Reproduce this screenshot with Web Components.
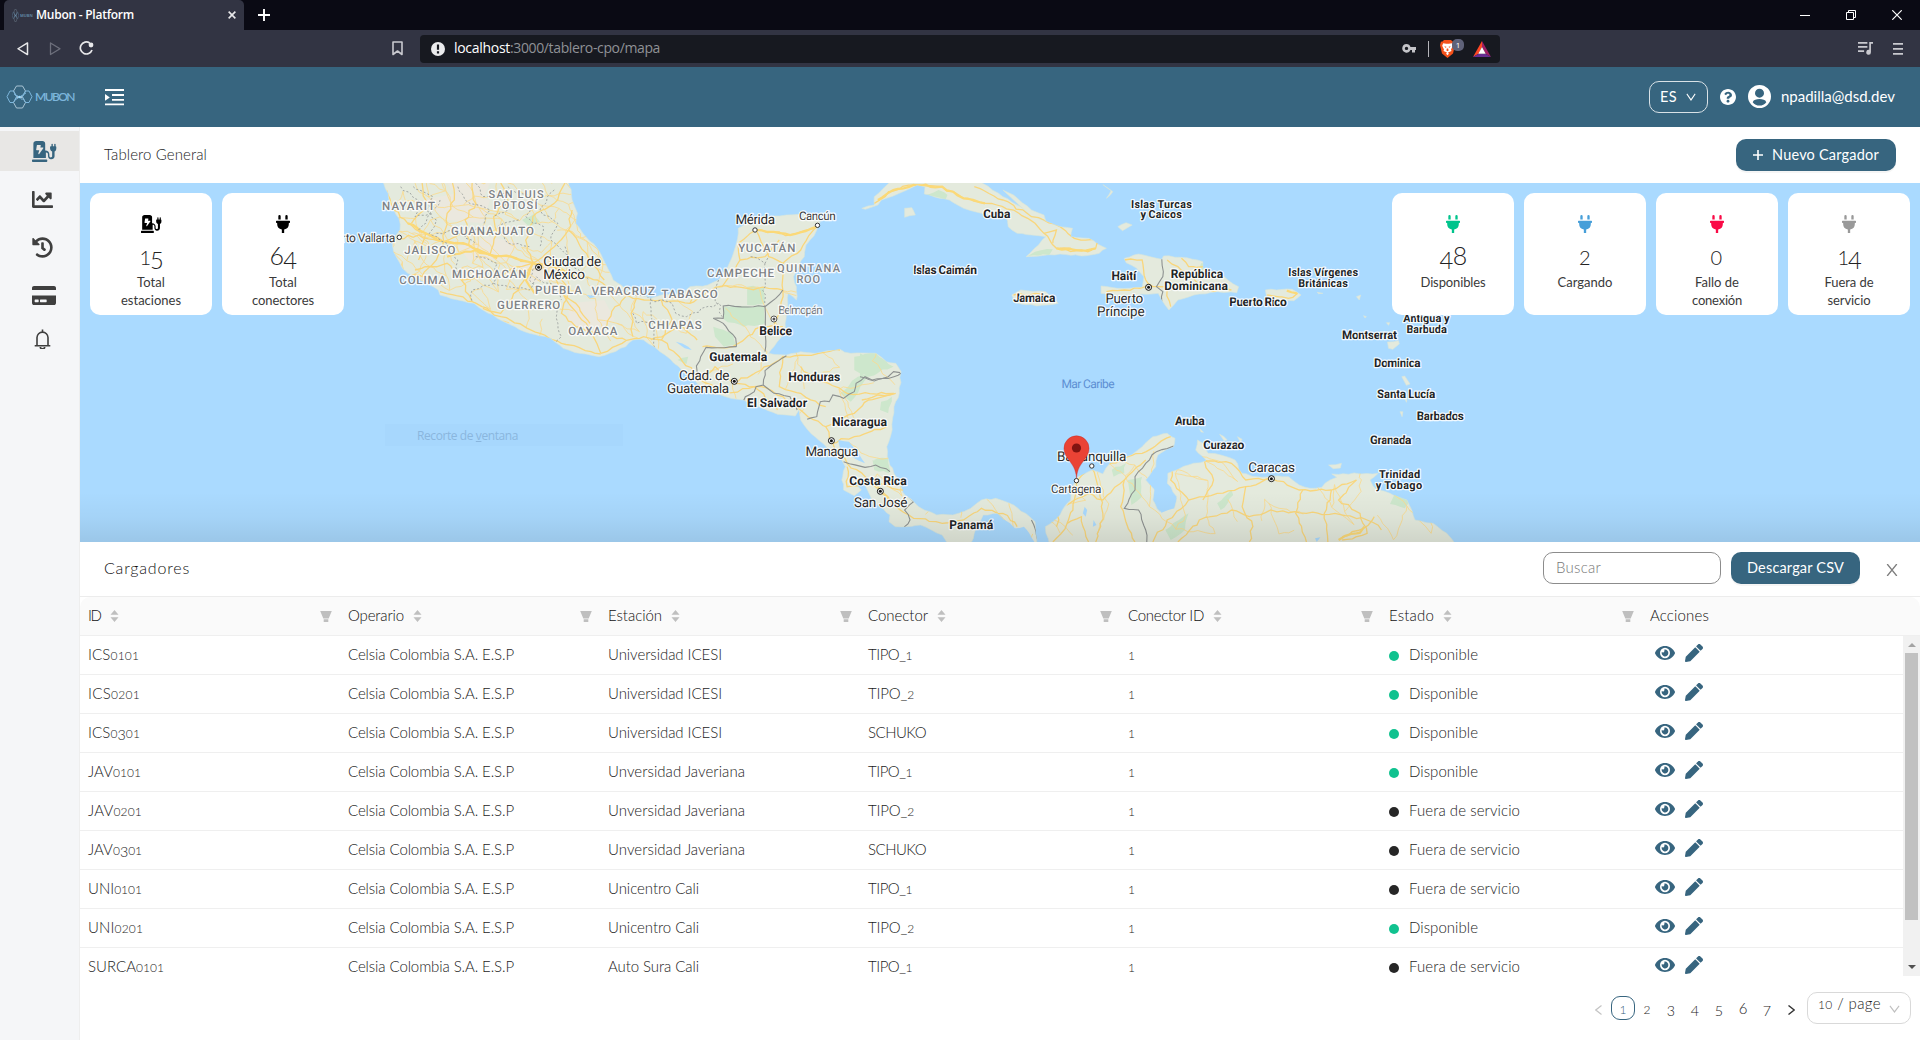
<!DOCTYPE html>
<html lang="es">
<head>
<meta charset="utf-8">
<title>Mubon - Platform</title>
<style>
html,body{margin:0;height:100%;overflow:hidden;background:#fff}
body{font-family:Lato,"Open Sans",sans-serif}
</style>
</head>
<body>
<mubon-app></mubon-app>
<script>
const define = (name, cls) => customElements.define(name, cls);
class Base extends HTMLElement {
  constructor() { super(); this.attachShadow({ mode: 'open' }); }
  connectedCallback() { this.shadowRoot.innerHTML = this.view(); this.ready && this.ready(); }
}

/* ---------- icons ---------- */
const fa = (w, d) => ({ box: `0 0 ${w} 512`, body: `<path fill="currentColor" d="${d}"/>` });
const line = (box, body, sw = 1.2) => ({ box, body: `<g fill="none" stroke="currentColor" stroke-width="${sw}">${body}</g>` });
const ICONS = {
  station: fa(576, 'M336 448H16c-8.84 0-16 7.16-16 16v32c0 8.84 7.16 16 16 16h320c8.84 0 16-7.16 16-16v-32c0-8.84-7.16-16-16-16zm208-320V80c0-8.84-7.16-16-16-16s-16 7.16-16 16v48h-32V80c0-8.84-7.16-16-16-16s-16 7.16-16 16v48h-16c-8.84 0-16 7.16-16 16v35.76c0 36.94 17.05 68.22 48 77.66V372c0 15.64-14.36 28-32 28s-32-14.36-32-32v-48c0-48.6-39.4-88-88-88h-8V64c0-35.35-28.65-64-64-64H96C60.65 0 32 28.65 32 64v352h288V280h8c22.09 0 40 17.91 40 40v48.61c0 39.67 28.92 75.16 68.41 79.01C481.71 452.05 520 416.41 520 372V257.4c31-9.4 40-40.7 40-77.6V144c0-8.84-7.16-16-16-16zm-283.91 47.76l-93.7 139c-2.2 3.33-6.21 5.24-10.39 5.24-7.67 0-13.47-6.28-11.67-12.92L167.35 224H108c-7.25 0-12.85-5.59-11.89-11.89l16-107C112.9 99.9 117.98 96 124 96h68c7.88 0 13.62 6.54 11.6 13.21L192 160h57.7c9.24 0 15.01 8.78 10.39 15.76z'),
  plug: fa(384, 'M320 32a32 32 0 0 0-64 0v96h64zm48 128H16A16 16 0 0 0 0 176v32a16 16 0 0 0 16 16h16v32a160.07 160.07 0 0 0 128 156.8V512h64v-99.2A160.07 160.07 0 0 0 352 256v-32h16a16 16 0 0 0 16-16v-32a16 16 0 0 0-16-16zM128 32a32 32 0 0 0-64 0v96h64z'),
  chart: { box: '0 64 512 384', body: '<path fill="currentColor" d="M496 384H64V80c0-8.84-7.16-16-16-16H16C7.16 64 0 71.16 0 80v336c0 17.67 14.33 32 32 32h464c8.84 0 16-7.16 16-16v-32c0-8.84-7.16-16-16-16zM464 96H345.94c-21.38 0-32.09 25.85-16.97 40.97l32.4 32.4L288 242.75l-73.37-73.37c-12.5-12.5-32.76-12.5-45.25 0l-68.69 68.69c-6.25 6.25-6.25 16.38 0 22.63l22.62 22.62c6.25 6.25 16.38 6.25 22.63 0L192 237.25l73.37 73.37c12.5 12.5 32.76 12.5 45.25 0l96-96 32.4 32.4c15.12 15.12 40.97 4.41 40.97-16.97V112c.01-8.84-7.15-16-15.99-16z"/>' },
  history: fa(512, 'M504 255.531c.253 136.64-111.18 248.372-247.82 248.468-59.015.042-113.223-20.53-155.822-54.911-11.077-8.94-11.905-25.541-1.839-35.607l11.267-11.267c8.609-8.609 22.353-9.551 31.891-1.984C173.062 425.135 212.781 440 256 440c101.705 0 184-82.311 184-184 0-101.705-82.311-184-184-184-48.814 0-93.149 18.969-126.068 49.932l50.754 50.754c10.08 10.08 2.941 27.314-11.313 27.314H24c-8.837 0-16-7.163-16-16V38.627c0-14.254 17.234-21.393 27.314-11.314l49.372 49.372C129.209 34.136 189.552 8 256 8c136.81 0 247.747 110.78 248 247.531zm-180.912 78.784l9.823-12.63c8.138-10.463 6.253-25.542-4.21-33.679L288 256.349V152c0-13.255-10.745-24-24-24h-16c-13.255 0-24 10.745-24 24v135.651l65.409 50.874c10.463 8.137 25.541 6.253 33.679-4.21z'),
  card: { box: '0 32 576 448', body: '<path fill="currentColor" d="M0 432c0 26.5 21.5 48 48 48h480c26.5 0 48-21.5 48-48V256H0v176zm192-68c0-6.6 5.4-12 12-12h136c6.6 0 12 5.4 12 12v40c0 6.600-5.400 12-12 12H204c-6.600 0-12-5.400-12-12v-40zm-128 0c0-6.600 5.400-12 12-12h72c6.600 0 12 5.400 12 12v40c0 6.600-5.400 12-12 12H76c-6.600 0-12-5.400-12-12v-40zM576 80v48H0V80c0-26.500 21.500-48 48-48h480c26.500 0 48 21.500 48 48z"/>' },
  eye: { box: '0 64 576 384', body: '<path fill="currentColor" d="M572.52 241.4C518.29 135.59 410.93 64 288 64S57.68 135.64 3.480 241.410a32.350 32.350 0 0 0 0 29.190C57.710 376.410 165.070 448 288 448s230.320-71.640 284.520-177.410a32.350 32.350 0 0 0 0-29.190zM288 400a144 144 0 1 1 144-144 143.930 143.930 0 0 1-144 144zm0-240a95.310 95.310 0 0 0-25.310 3.790 47.850 47.850 0 0 1-66.900 66.900A95.780 95.780 0 1 0 288 160z"/>' },
  pencil: fa(512, 'M497.9 142.1l-46.1 46.1c-4.7 4.7-12.3 4.7-17 0l-111-111c-4.7-4.7-4.7-12.3 0-17l46.1-46.1c18.700-18.700 49.100-18.700 67.900 0l60.100 60.100c18.800 18.700 18.800 49.100 0 67.900zM284.200 99.800L21.600 362.400.400 483.900c-2.900 16.400 11.400 30.600 27.800 27.800l121.500-21.300 262.600-262.600c4.700-4.700 4.700-12.300 0-17l-111-111c-4.800-4.700-12.400-4.700-17.100 0z'),
  help: { box: '8 8 496 496', body: '<path fill="currentColor" d="M504 256c0 136.997-111.043 248-248 248S8 392.997 8 256C8 119.083 119.043 8 256 8s248 111.083 248 248zM262.655 90c-54.497 0-89.255 22.957-116.549 63.758-3.536 5.286-2.353 12.415 2.715 16.258l34.699 26.310c5.205 3.947 12.621 3.008 16.665-2.122 17.864-22.658 30.113-35.797 57.303-35.797 20.429 0 45.698 13.148 45.698 32.958 0 14.976-12.363 22.667-32.534 33.976C247.128 238.528 216 254.941 216 296v4c0 6.627 5.373 12 12 12h56c6.627 0 12-5.373 12-12v-1.333c0-28.462 83.186-29.647 83.186-106.667 0-58.002-60.165-102-116.531-102zM256 338c-25.365 0-46 20.635-46 46 0 25.364 20.635 46 46 46s46-20.636 46-46c0-25.365-20.635-46-46-46z"/>' },
  user: { box: '0 0 24 24', body: '<path fill="currentColor" fill-rule="evenodd" d="M12 0a12 12 0 1 0 0 24 12 12 0 0 0 0-24zm0 3.800a4.700 4.700 0 1 1 0 9.400 4.700 4.700 0 0 1 0-9.400zM4.900 18c.9-2.600 4-3.300 7.100-3.300s6.200.7 7.100 3.300c-1.700 2.400-4.300 3.500-7.100 3.500S6.600 20.400 4.900 18z"/>' },
  bell: line('0 0 17 20', '<path d="M3 16.700V8.600a5.500 5.500 0 0 1 11 0v8.100M.7 16.800h15.600M8.500 3V.5"/><path d="M6.300 18a2.200 1.800 0 0 0 4.400 0"/>', 1.6),
  fold: { box: '0 0 19 18', body: '<path fill="currentColor" d="M0 0h19v2H0zM7 5.300h12v2H7zM7 10.500h12v2H7zM0 15.300h19v2H0zM0 5.300l4.800 3.600L0 12.500z"/>' },
  plus: line('0 0 10 10', '<path d="M5 0v10M0 5h10"/>', 1.6),
  chev: line('0 0 12 8', '<path d="M1 .8l5 6.200 5-6.200"/>', 1.2),
  prev: line('0 0 7 10', '<path d="M6.500.5L.8 5l5.700 4.500"/>', 1.2),
  next: line('0 0 7 10', '<path d="M.5.500L6.200 5 .5 9.500"/>', 1.4),
  sort: { box: '0 0 9 13', body: '<path fill="#bfbfbf" d="M4.500 0l4 5.200h-8zM4.500 13l4-5.200h-8z"/>' },
  filter: { box: '0 0 12 11', body: '<path fill="#bfbfbf" d="M.2 0h11.600L8.700 7.400H3.300zM3.700 8.200h4.600V11H3.700z"/>' },
  back: line('0 0 12 15', '<path stroke-linejoin="round" d="M10.500 1v12.500L1 7.200z"/>', 1.5),
  fwd: line('0 0 12 15', '<path stroke-linejoin="round" d="M1.500 1v12.500L11 7.200z"/>', 1.300),
  reload: { box: '0 0 15 15', body: '<path fill="none" stroke="currentColor" stroke-width="1.700" d="M10.700 2A6 6 0 1 0 13 9"/><circle cx="12" cy="4" r="2.400" fill="currentColor"/>' },
  mark: line('0 0 11 15', '<path stroke-linejoin="round" d="M1 1h9v12.500L5.500 10 1 13.500z"/>', 1.600),
  info: { box: '0 0 14 14', body: '<circle cx="7" cy="7" r="7" fill="#ebebed"/><path fill="#171920" d="M5.900 2.600h2.200v5.200H5.900zM5.900 9.200h2.200v2.200H5.900z"/>' },
  key: { box: '0 0 14 9', body: '<path fill="currentColor" fill-rule="evenodd" d="M4.500 0a4.300 4.300 0 0 1 4 3H14v3h-1v2.500h-3V6H8.500a4.300 4.300 0 1 1-4-6zm0 2.700a1.700 1.700 0 1 0 0 3.400 1.700 1.700 0 0 0 0-3.400z"/>' },
  brave: { box: '0 0 15 18', body: '<path fill="#f4511a" d="M4 0h7l1.500 1.500 1.600.3.900 3.400-2 8.300-5.500 4.500L2 13.500 0 5.200l.9-3.400 1.600-.3z"/><path fill="#fff" d="M3.200 3.200l3 .5h2.600l3-.5 1 2.600-1.800 3.600.5 1.600-3.500 1.500.9 1.300L7.500 15.300l-1.400-1.500.9-1.300L3.500 11l.5-1.600-1.800-3.600z"/><path fill="#f4511a" d="M4.200 6.300l2.200.5-.5 1.100zM10.800 6.300l-2.200.5.5 1.100zM6.800 8.500h1.400l.4 2-1.100.7-1.100-.7z"/>' },
  bat: { box: '0 0 18 16', body: '<path fill="#ff4724" d="M9 0L0 16l5.500-3.300L9 6z"/><path fill="#9e1f63" d="M9 0l9 16-5.500-3.300L9 6z"/><path fill="#662d91" d="M0 16h18l-5.500-3.300h-7z"/><path fill="#fff" d="M9 6l3.700 6.700H5.300z"/>' },
  list: { box: '0 0 16 13', body: '<path fill="currentColor" d="M0 0h10v1.700H0zM0 4h10v1.700H0zM0 8.200h6.500V10H0zM12 0h4v1.800h-2.200v8.400a2.500 2.500 0 1 1-1.800-2.400z"/>' },
  burger: { box: '0 0 10 12', body: '<path fill="currentColor" d="M0 0h10v1.800H0zM0 5h10v1.800H0zM0 10h10v1.800H0z"/>' },
  min: line('0 0 10 10', '<path d="M0 5.500h10"/>', 1),
  restore: line('0 0 10 10', '<path d="M.5 2.500h7v7h-7zM2.500 2.500v-2h7v7h-2"/>', 1),
  close: line('0 0 10 10', '<path d="M.3.300l9.400 9.400M9.700.3L.3 9.700"/>', 1.200),
  tabx: line('0 0 10 10', '<path d="M.8.800l8.400 8.400M9.200.8L.8 9.200"/>', 2),
  x: line('0 0 12 12', '<path d="M1.200 0l9.600 12M10.800 0L1.200 12"/>', 1.300),
  hex: line('0 0 27 24', '<g stroke="#a9c4d4"><path d="M10.500 1h6l3 5-3 5.500h-6L7.500 6zM10.500 12.500h6l3 5-3 5.500h-6l-3-5.500z"/></g><g stroke="#7cb6dc"><path d="M4 6h3.500l3 5.700-3 5.800H4L1 11.700zM23 6h-3.500l-3 5.700 3 5.800H23l3-5.800zM8 9l5.500 3L20 8M9 15l4.500-3 3 3"/></g><circle cx="13.500" cy="12" r="1.200" fill="#9fdcff" stroke="none"/>', 1),
};
define('ui-icon', class extends Base {
  view() {
    const i = ICONS[this.getAttribute('name')], w = this.getAttribute('w'), h = this.getAttribute('h');
    return `<style>:host{display:block;flex:none;width:${w}px;height:${h}px}svg{display:block;width:100%;height:100%}</style>
    <svg viewBox="${i.box}" preserveAspectRatio="none">${i.body}</svg>`;
  }
});

/* Text tracked so that it fills the width given in w */
define('fit-text', class extends Base {
  view() { return `<style>:host{display:block;flex:none;width:${this.getAttribute('w')}px;white-space:nowrap;margin-top:-2px}span{display:inline-block}</style><span><slot></slot></span>`; }
  ready() {
    const s = this.shadowRoot.querySelector('span'), n = this.textContent.length;
    this.style.letterSpacing = '0px';
    const d = (+this.getAttribute('w') - s.getBoundingClientRect().width) / n;
    this.style.letterSpacing = d.toFixed(3) + 'px';
  }
});
/* Old-style figures: 0-2 at x-height, 3 4 5 7 9 hanging below the baseline */
const osf = t => String(t).replace(/[0-2]+|[34579]/g, m => m < '3'
  ? `<b style="font-weight:inherit;line-height:0;font-size:.8em">${m}</b>`
  : `<b style="font-weight:inherit;line-height:0;position:relative;top:.17em;font-size:.95em">${m}</b>`);

/* ---------- browser frame ---------- */
define('browser-bar', class extends Base {
  view() { return `<style>
  :host{display:block;color:#e8e8ea;font-family:"Open Sans",sans-serif}
  .tabs{height:30px;background:#0a0a14;display:flex;align-items:center;padding-left:4px}
  .tab{width:240px;height:30px;box-sizing:border-box;background:#323443;border-radius:5px 5px 0 0;display:flex;align-items:center;padding:0 8px}
  .tab .t{font-weight:600;font-size:12px;margin-left:8px;margin-right:auto;color:#fff}
  .fav{display:flex;align-items:center;gap:1px;opacity:.6;font-size:4px;width:16px;font-weight:700;color:#7cb6dc}
  .win{margin-left:auto;display:flex;gap:36px;padding-right:18px;color:#fff}
  .tools{height:37px;background:#323443;display:flex;align-items:center;padding:0 17px}
  .url{width:1080px;height:28px;box-sizing:border-box;background:#171920;border-radius:4px;margin-left:17px;display:flex;align-items:center;padding:0 9px 0 11px;font-size:14px;color:#8f9196}
  .br{position:relative}.badge{position:absolute;left:12px;top:-1px;width:12px;height:12px;border-radius:5px;background:#5f6279;color:#fff;font-size:8px;line-height:12px;text-align:center}
  </style>
  <div class="tabs"><div class="tab"><div class="fav"><ui-icon name="hex" w="7" h="13"></ui-icon><span>MUBN</span></div><fit-text class="t" w="98">Mubon - Platform</fit-text><ui-icon name="tabx" w="8" h="8"></ui-icon></div>
  <ui-icon name="plus" w="12" h="12" style="margin-left:14px;color:#fff"></ui-icon>
  <div class="win"><ui-icon name="min" w="10" h="10"></ui-icon><ui-icon name="restore" w="10" h="10"></ui-icon><ui-icon name="close" w="10" h="10"></ui-icon></div></div>
  <div class="tools"><ui-icon name="back" w="12" h="14"></ui-icon><ui-icon name="fwd" w="12" h="14" style="margin-left:20px;color:#6d6f7c"></ui-icon><ui-icon name="reload" w="15" h="15" style="margin-left:18px"></ui-icon>
  <ui-icon name="mark" w="11" h="15" style="margin-left:298px;color:#c9c9cf"></ui-icon>
  <div class="url"><ui-icon name="info" w="14" h="14"></ui-icon><fit-text w="56" style="margin-left:9px;color:#fff">localhost</fit-text><fit-text w="150">:3000/tablero-cpo/mapa</fit-text>
  <ui-icon name="key" w="14" h="9" style="margin-left:auto;color:#c4c4c8"></ui-icon><i style="width:1px;height:16px;background:#b5b5ba;margin:0 11px 0 12px"></i>
  <div class="br"><ui-icon name="brave" w="15" h="18"></ui-icon><span class="badge">1</span></div><ui-icon name="bat" w="18" h="16" style="margin-left:18px"></ui-icon></div>
  <ui-icon name="list" w="15" h="13" style="margin-left:auto;color:#c9c9cf"></ui-icon><ui-icon name="burger" w="10" h="12" style="margin-left:20px;color:#c9c9cf"></ui-icon></div>`; }
});

/* ---------- application header ---------- */
define('app-header', class extends Base {
  view() { return `<style>
  :host{display:flex;align-items:center;height:60px;background:#37657f;color:#fff;padding:0 25px 0 6px;font-size:15px}
  .logo{color:#7cb6dc;font:600 12px Lato,sans-serif;margin-left:2px}
  .es{width:59px;height:32px;box-sizing:border-box;border:1px solid #d9e2e7;border-radius:10px;display:flex;align-items:center;padding:0 11px 0 10px;justify-content:space-between;font-size:14.500px;margin-left:auto}
  </style><ui-icon name="hex" w="27" h="24"></ui-icon><fit-text class="logo" w="39">MUBON</fit-text><ui-icon name="fold" w="19" h="17" style="margin-left:31px"></ui-icon>
  <div class="es"><fit-text w="17">ES</fit-text><ui-icon name="chev" w="10" h="8"></ui-icon></div>
  <ui-icon name="help" w="16" h="16" style="margin-left:12px"></ui-icon><ui-icon name="user" w="23" h="23" style="margin-left:12px;position:relative;top:-1px"></ui-icon>
  <fit-text w="114" style="margin-left:10px">npadilla@dsd.dev</fit-text>`; }
});
define('side-nav', class extends Base {
  view() { return `<style>
  :host{display:block;width:79px;background:#f5f6f8;border-right:1px solid #eee;color:#3f3f3f;padding-top:4px;box-sizing:content-box}
  div{height:40px;display:flex;align-items:center;padding-left:32px;margin-bottom:8px}
  .on{background:#e8e7e5;color:#37657f}
  </style><div class="on"><ui-icon name="station" w="25" h="21"></ui-icon></div>
  <div><ui-icon name="chart" w="21" h="17"></ui-icon></div>
  <div><ui-icon name="history" w="21" h="21"></ui-icon></div>
  <div><ui-icon name="card" w="24" h="19"></ui-icon></div>
  <div style="padding-left:34px;margin-top:-4px"><ui-icon name="bell" w="17" h="20"></ui-icon></div>`; }
});
define('ui-button', class extends Base {
  view() { return `<style>:host{display:flex;align-items:center;justify-content:center;height:32px;border-radius:10px;background:#37657f;color:#fff;font-size:14.500px;font-weight:400;box-shadow:0 2px 0 rgba(0,0,0,.04)}</style><slot></slot>`; }
});

/* ---------- map ---------- */
/* Outlines are in survey units: 2.8 per pixel across, 3 per pixel down, from (340,180). */
const E = 1456;
const shift = s => s.split(' ').map(p => { const [x, y] = p.split(','); return (+x + E) + ',' + y; }).join(' ');
const MAIN = '118,0 135,40 140,75 165,115 168,150 148,180 150,215 175,265 190,280 235,305 275,330 280,345 330,360 375,370 400,390 440,415 490,440 530,460 590,475 625,505 670,520 725,530 755,520 800,500 820,480 850,480 880,500 910,525 935,550 965,580 1000,610 1020,635 1080,650 1130,660 1170,680 1225,703 1275,708 1285,690 1290,720 1310,750 1340,780 1375,815 1405,840 1415,860 1405,900 1410,930 1440,947 1460,930 1440,905 1470,915 1490,960 1520,985 1540,1005 1537,1025 1555,1040 1586,1040 1626,1035 1656,1050 1686,1065 1701,1090 1766,1090 1776,1060 1790,1030 1801,1005 1841,1000 1876,1040 1896,1060 1916,1090 1986,1090 1975,1040 2016,1005 2046,960 2051,920 2066,890 2106,870 2136,882 2156,850 2216,825 2246,800 2276,770 2316,760 2338,775 2334,800 2290,825 2284,860 2256,900 2281,930 2276,960 2296,995 2336,985 2343,950 2316,910 2318,880 2376,855 2426,842 2396,810 2401,780 2416,790 2431,820 2466,825 2506,840 2526,880 2566,890 2656,890 2686,915 2716,925 2749,922 2772,900 2791,892 2777,882 2907,880 2884,900 2903,930 2940,940 2987,960 3001,990 3010,1020 3061,1030 3099,1060 3122,1090 3122,1200 1586,1200 1951,1090 1946,1025 1931,1010 1886,975 1836,955 1796,960 1766,985 1716,1005 1671,1005 1636,990 1606,965 1586,950 1571,920 1551,880 1536,840 1531,800 1546,750 1551,680 1566,640 1571,575 1556,550 1530,545 1500,520 1430,520 1400,508 1330,520 1290,515 1250,525 1200,520 1215,500 1245,460 1250,400 1255,340 1278,360 1278,320 1270,290 1300,230 1305,195 1335,150 1345,125 1320,105 1250,105 1150,120 1115,145 1110,190 1100,225 1090,250 1060,300 1030,315 980,320 960,340 900,345 870,355 810,335 765,300 745,255 720,205 680,160 660,130 665,100 650,60 640,0';
const WATER = ['1395,780 1425,785 1440,805 1470,850 1440,835 1400,805', '2281,900 2310,885 2318,930 2342,955 2335,985 2300,998 2280,960', '1840,1100 1950,1100 1944,1085 1930,1060 1915,1040 1890,1045 1876,1030 1840,1005 1801,1010 1785,1040 1770,1100', '2085,980 2092,990 2088,1010 2080,1000', '2110,1020 2118,1035 2108,1040', '940,485 975,500 985,510 965,505', '690,345 715,350 700,355', '2730,1075 2745,1072 2735,1086'];
const ISLES = ['5,85 40,75 40,50 75,15 90,0 330,0 400,50 450,80 490,110 560,140 595,145 590,170 640,175 690,205 670,220 620,228 560,222 465,230 500,195 520,170 480,165 440,160 415,140 410,110 340,100 290,85 250,60 180,42 182,20 160,15 110,40 60,60 50,75 15,88','125,85 145,83 155,105 125,112','740,235 780,222 845,238 850,228 900,232 960,245 960,265 1020,290 1060,320 1055,338 1000,335 935,345 890,360 865,390 845,360 835,340 760,345 700,345 675,340 675,318 720,325 790,322 795,290 775,265 745,248','425,345 450,330 520,335 555,370 495,378 435,368','1135,330 1210,328 1235,345 1215,362 1140,360','400,30 430,45 480,90 515,105 520,122 480,108 440,70','680,14 708,35 690,55 703,32','722,140 745,128 762,135 735,152','1477,486 1508,482 1510,492 1492,508 1480,505','1517,590 1525,588 1540,612 1530,616','1512,695 1520,695 1518,710','1312,855 1348,850 1345,864 1325,866','950,745 962,757 955,756','1007,763 1028,780 1020,783','1057,770 1070,778 1065,786','1474,428 1483,428 1480,436','1410,407 1418,410 1414,414','1390,350 1402,345 1398,360','1280,337 1296,340 1284,341','1525,655 1532,655 1530,667'].map(shift);
const GREEN = ['1140,320 1188,320 1188,372 1140,375','1075,380 1188,378 1190,430 1130,440 1075,418','1045,440 1100,460 1108,495 1075,500 1050,470','1400,640 1450,590 1485,580 1430,665','1440,530 1500,520 1550,560 1480,590 1440,570','1495,840 1535,835 1540,870 1510,872','510,120 545,100 560,125 530,140','1515,665 1545,650 1535,700 1512,690','945,540 975,530 970,552'].concat(['180,45 220,30 245,45 230,65','490,215 540,208 530,225 470,228','955,250 962,250 960,290 945,280','705,870 745,850 740,880 710,890','750,900 790,890 790,950 760,975','0,520 50,545 40,575 0,590','1498,940 1541,960 1525,985 1484,972','1000,970 1040,930 1045,945 1010,990','855,1050 920,1000 910,1050 870,1080','35,840 85,870 80,880 40,870'].map(shift));
const TAN = ['230,60 330,40 420,60 400,130 300,120','640,370 740,360 770,420 700,460 640,430','330,200 420,170 500,190 470,240 360,240','300,10 420,10 400,60 320,40','500,250 590,240 600,300 520,310'];
const ROADS = ['130,30 150,90 190,130 240,160 290,185 360,195 420,225 480,230 540,250 600,260 660,290 720,300 760,330 820,355 900,360 980,370 1040,330 1070,320 1120,240 1115,190 1165,150 1260,165 1335,140','160,175 220,165 290,185 270,240 230,290 200,285','290,185 300,100 320,60 315,9','360,195 350,120 380,70 370,9','420,225 440,160 430,110 470,60 450,9','540,250 520,180 540,110 600,70 630,9','540,250 600,200 640,150 650,90','540,250 500,330 450,400 400,385','600,290 640,370 690,430 730,520','730,520 790,490 850,470 900,480 950,530 1010,600 1080,640 1160,620 1225,690','600,260 640,330 620,400 660,440 730,460 800,480','730,460 770,380 800,350','820,470 815,400 830,355','280,335 370,365 450,410 560,460 620,490 730,522','210,270 300,250 340,300 370,365','900,360 930,420 900,480','980,370 1010,330','1060,320 1140,325 1200,325 1240,330','1165,150 1200,230 1240,250 1240,330 1230,400 1215,440','1335,140 1290,210 1240,250','1120,240 1190,230 1230,180','1100,610 1180,570 1240,530 1340,520 1400,510','1100,610 1180,620 1240,650 1300,700 1360,740 1380,790 1420,850 1500,910 1540,960','1240,530 1230,620 1290,640 1360,680','1290,560 1340,600 1420,640 1550,640','1360,740 1440,700 1480,660 1550,640','1375,790 1440,770 1530,740','1420,860 1420,920 1500,910 1580,930','1015,500 1100,500 1180,440 1240,440','1010,600 1050,560 1100,610','200,130 240,80 230,9','240,160 220,240','340,300 440,290 500,260 540,250','440,160 350,160 290,185','640,150 690,220 740,300','700,430 660,370 620,340','870,480 960,440 1000,480'].concat(['40,70 80,35 150,15 230,20 290,55 350,70 430,90 490,130 515,160 550,205 620,212 660,205 670,180 600,175 560,140 480,110 400,60 320,20','515,160 550,150 540,190','560,205 590,215 650,210','740,240 790,240 800,300 820,320 860,325 870,380','860,240 890,260 930,290 960,330 1040,330','800,320 740,330 690,335','900,235 920,260 960,260','1140,345 1200,355 1225,340','430,345 490,340 545,365','20,900 60,940 100,980 150,1015 230,1030 290,1020 340,985 400,1000 440,1040','540,1086 580,1030 600,960 610,900 650,865 700,850 790,820 870,770','600,960 640,940 680,960 740,900 800,840','580,1030 620,1010 640,1086','650,865 670,930 680,1000 660,1086','740,900 730,980 760,1060 770,1086','870,860 960,840 1040,850 1080,900 1150,895 1230,930 1320,930 1390,900','820,1086 860,1020 920,960 1000,940 1080,920 1150,895','890,1086 950,1020 1040,990 1090,1010 1150,990 1250,1000 1330,1000 1420,1020 1460,1050','965,845 990,900 960,960','1080,920 1070,980 1100,1040 1090,1086','1240,930 1220,1000 1250,1086','1320,930 1300,1000 1310,1086','1390,900 1340,960 1400,1000 1420,1060 1350,1080','870,860 870,900 920,960','1350,1070 1410,1045 1440,1010','5,660 50,645 100,640','600,960 560,990 550,1040'].map(shift));
const HIGHWAYS = ['190,130 240,160 290,185 360,195 420,225 480,230 540,250 600,260 660,290','300,230 380,210 440,235','540,250 520,300 545,340','1165,150 1260,165 1335,140'].concat(['50,60 80,38 150,15 230,20 290,55 350,70','550,205 620,212 660,205','1340,1080 1375,1062 1400,1058 1412,1040','1195,332 1225,340'].map(shift));
const BORDERS = ['1568,578 1550,575 1535,590 1490,600 1470,590 1445,610 1440,635 1410,655 1380,645 1370,665 1345,665 1335,710 1308,718','1250,527 1190,572 1185,615 1165,620 1160,635 1135,650 1130,662','1185,615 1215,640 1260,650 1280,690','1110,500 1025,502 998,558 1000,575 1003,590','1110,500 1108,475 1073,430 1045,415 1073,415 1073,378 1190,380 1220,355 1240,330','1190,380 1190,515','1410,845 1470,862 1500,855 1540,875'].concat(['0,590 40,603 95,590 118,577','845,238 848,290 830,320 848,335 845,365','878,798 830,815 800,850 770,890 770,930 740,985 780,990 800,1050 803,1086','135,950 150,965 125,990 140,1020 125,1040 132,1062','480,1020 490,1045 500,1086'].map(shift));
const STATES = ['205,20 260,50 240,90 270,120 250,160 300,190 330,240 320,290','330,20 350,60 420,90 400,140 360,160','470,20 540,60 520,110 570,140 560,200','600,30 560,90 610,130 590,180 640,230','380,230 440,250 430,310 370,330 370,365','430,310 530,330 550,290 600,320 620,360','600,370 610,430 620,470 605,490','700,350 780,330 870,355 880,440 880,505','870,360 930,370 940,400 970,410 1060,370','1060,300 1050,350 1070,410','1150,230 1190,250 1200,230','1190,250 1190,380','820,400 830,430 880,420','500,120 440,140 470,190 530,200','270,160 320,150 380,190','630,200 650,260 700,300','550,260 530,300 560,330 640,330','170,20 220,60 210,110 260,100','380,10 400,50 460,40 470,90 430,110','280,60 240,130 220,150'];
const poly = l => l.map(p => `<polygon points="${p}"/>`).join('');
const path = l => l.map(p => `<polyline points="${p}"/>`).join('');
let seed = 11;
const rnd = () => (seed = (seed * 16807) % 2147483647) / 2147483647;
/* Breaks each segment into small bends so that roads do not run dead straight */
const bend = (s, amp) => {
  const p = s.split(' ').map(v => v.split(',').map(Number)), out = [p[0]];
  for (let i = 1; i < p.length; i++) {
    const [a, b] = [p[i - 1], p[i]], n = Math.max(1, Math.round(Math.hypot(a[0] - b[0], a[1] - b[1]) / 16));
    for (let k = 1; k <= n; k++) out.push([a[0] + (b[0] - a[0]) * k / n + (k < n ? (rnd() - .5) * amp : 0), a[1] + (b[1] - a[1]) * k / n + (k < n ? (rnd() - .5) * amp : 0)]);
  }
  return out.map(v => v.map(n => n.toFixed(1)).join(',')).join(' ');
};
const mesh = (x0, y0, x1, y1, step, keep) => {
  const pts = [], out = [];
  for (let y = y0; y <= y1; y += step) { const r = []; for (let x = x0; x <= x1; x += step) r.push([x + (rnd() - .5) * step * .9, y + (rnd() - .5) * step * .9]); pts.push(r); }
  pts.forEach((r, j) => r.forEach((p, i) => [[0, 1], [1, 0], [1, 1]].forEach(([dj, di]) => {
    const q = pts[j + dj] && pts[j + dj][i + di];
    if (q && rnd() < keep) out.push(bend(`${p} ${q}`, 9));
  })));
  return out;
};
const NET = [...mesh(120, 0, 760, 320, 40, .45), ...mesh(380, 300, 900, 520, 65, .34), ...mesh(880, 340, 1560, 940, 75, .26), ...mesh(2000, 840, 3100, 1090, 70, .36), ...mesh(1600, 950, 1960, 1090, 70, .25)];
/* text, left, right, middle, size, kind */
const LABELS = [
['NAYARIT',118,266,78,11.5,'s'],['SAN LUIS',416,570,42,11,'s'],['POTOSÍ',430,553,76,11,'s'],['GUANAJUATO',311,543,153,11.5,'s'],['rto Vallarta',5,155,174,12,'t'],['JALISCO',180,323,210,11.5,'s'],['COLIMA',166,297,300,11.5,'s'],['MICHOACÁN',314,522,282,11.5,'s'],['PUEBLA',546,677,330,11.5,'s'],['VERACRUZ',704,882,333,11.5,'s'],['TABASCO',900,1058,343,11.5,'s'],['GUERRERO',440,617,375,11.5,'s'],['OAXACA',639,777,453,11.5,'s'],['CHIAPAS',863,1013,435,11.5,'s'],['YUCATÁN',1115,1275,204,11.5,'s'],['CAMPECHE',1028,1215,279,11.5,'s'],['QUINTANA',1224,1400,264,11,'s'],['ROO',1278,1344,298,11,'s'],
['Ciudad de',569,731,244,13.5,'c'],['México',569,686,284,13.5,'c'],['Mérida',1107,1218,118,13.5,'c'],['Cancún',1285,1388,108,11.8,'t'],['Belmopán',1227,1351,391,11.5,'g'],['Belice',1174,1266,451,12.2,'b'],['Guatemala',1034,1196,529,12.2,'b'],['Cdad. de',949,1090,586,13.5,'c'],['Guatemala',916,1090,625,13.5,'c'],['Honduras',1255,1401,589,12.2,'b'],['El Salvador',1140,1308,667,12.2,'b'],['Nicaragua',1378,1532,724,12.2,'b'],['Managua',1303,1451,814,13.5,'c'],['Costa Rica',1426,1587,901,12.2,'b'],['San José',1439,1589,967,13.5,'c'],
['Cuba',1801,1877,103,12,'b'],['Islas Turcas',2215,2385,72,11,'b'],['y Caicos',2241,2357,104,11,'b'],['Islas Caimán',1605,1784,271,12,'b'],['Haití',2160,2230,286,12.2,'b'],['República',2326,2473,283,12,'b'],['Dominicana',2308,2486,319,12,'b'],['Puerto',2143,2249,355,13.5,'c'],['Príncipe',2120,2253,394,13.5,'c'],['Jamaica',1885,2003,355,12,'b'],['Puerto Rico',2490,2651,367,12,'b'],['Islas Vírgenes',2655,2851,276,11,'b'],['Británicas',2683,2822,310,11,'b'],['Mar Caribe',2020,2169,612,12,'w'],['Aruba',2338,2421,724,12,'b'],['Curazao',2417,2532,796,12,'b'],['Barranquilla',2008,2202,829,13.5,'c'],['Cartagena',1991,2132,927,11.8,'t'],['Caracas',2543,2674,862,13.5,'c'],['Panamá',1706,1829,1033,12.2,'b'],
['Montserrat',2806,2960,465,11.8,'b'],['Antigua y',2977,3107,416,11,'b'],['Barbuda',2986,3099,449,11,'b'],['Dominica',2895,3026,549,11.8,'b'],['Santa Lucía',2904,3067,642,11.8,'b'],['Barbados',3015,3147,708,11.8,'b'],['Granada',2884,3000,780,11.8,'b'],['Trinidad',2909,3025,883,11,'b'],['y Tobago',2900,3030,916,11,'b']];
const DOTS = [[166,172,0],[556,262,1],[1162,150,0],[1337,136,0],[1215,417,2],[1104,604,1],[1376,782,1],[1513,934,1],[2264,322,1],[2105,858,0],[2062,902,0],[2608,896,1]];
const X = x => 340 + x / 2.8, Y = y => 180 + y / 3;
define('world-map', class extends Base {
  view() {
    const labels = LABELS.map(([t, a, b, c, z, k]) => `<text class="${k}" x="${X(a).toFixed(1)}" y="${(Y(c) + z * .34).toFixed(1)}" font-size="${z}" textLength="${((b - a) / 2.8).toFixed(1)}">${t}</text>`).join('');
    const dots = DOTS.map(([x, y, k]) => k ? `<circle cx="${X(x)}" cy="${Y(y)}" r="3" fill="#fff" stroke="${k > 1 ? '#555' : '#111'}"/><circle cx="${X(x)}" cy="${Y(y)}" r="1.500" fill="${k > 1 ? '#555' : '#111'}"/>` : `<circle cx="${X(x)}" cy="${Y(y)}" r="2.200" fill="#fff" stroke="#333"/>`).join('');
    return `<style>
    :host{display:block;position:relative;height:359px;background:#aadaff;overflow:hidden}
    svg{display:block;width:1840px;height:359px}
    polygon,polyline{vector-effect:non-scaling-stroke}
    text{font-family:Roboto,sans-serif;paint-order:stroke;stroke:#fff;stroke-opacity:.85;stroke-width:2.500px;stroke-linejoin:round;fill:#222;text-rendering:geometricPrecision}
    .s{fill:#7d8185;font-weight:500}.b{font-weight:700;fill:#212426}.c{fill:#2b2b2b}.t{fill:#3a3a3a}.g{fill:#70757a}.w{fill:#5d8fd3;stroke:none}
    .shade{position:absolute;inset:auto 0 0 0;height:50px;background:linear-gradient(rgba(0,0,0,0),rgba(0,0,0,.03) 50%,rgba(0,0,0,.09))}
    .cards{position:absolute;inset:10px 10px auto 10px;display:flex;justify-content:space-between}
    .cards div{display:flex;gap:10px}
    .ghost{position:absolute;left:305px;top:241px;width:238px;height:22px;background:rgba(120,170,215,.05);font:400 12px/24px "Open Sans",sans-serif;color:#8ab6de;padding-left:32px;box-sizing:border-box}
    .ghost fit-text{margin:0}
    </style>
    <svg viewBox="80 183 1840 359"><defs>
      <clipPath id="land"><polygon points="${MAIN}"/>${poly(ISLES)}</clipPath>
    </defs><g transform="translate(340 180) scale(.357143 .333333)">
      <g fill="#e4eadd" stroke="#d9e6da" stroke-width=".6"><polygon points="${bend(MAIN, 5)}"/>${poly(ISLES.map(i => bend(i, 4)))}</g>
      <g clip-path="url(#land)">
        <g fill="#eee7de" opacity=".7">${poly(TAN)}</g>
        <g fill="#cde7cc">${poly(GREEN.map(i => bend(i, 8)))}</g>
        <g fill="none" stroke="#f8db93" stroke-width=".9">${path(NET)}</g>
        <g fill="none" stroke="#f9d67c" stroke-width="1.300">${path(ROADS.map(r => bend(r, 9)))}</g>
        <g fill="none" stroke="#fbd978" stroke-width="2.200">${path(HIGHWAYS.map(r => bend(r, 7)))}</g>
        <g fill="none" stroke="#a3a8a5" stroke-width="1" stroke-dasharray="2 2">${path(STATES.map(r => bend(r, 12)))}</g>
        <g fill="none" stroke="#8d9190" stroke-width="1.100">${path(BORDERS.map(r => bend(r, 5)))}</g>
      </g>
      <g fill="#aadaff">${poly(WATER.map(i => bend(i, 4)))}</g>
    </g>${labels}${dots}
    <path fill="#ea4335" stroke="#c5221f" stroke-width=".4" d="M1076.500 478c-.7-9-3.600-12.500-7.300-17.500-3-4-5.200-7.200-5.200-12.200a12.500 12.500 0 0 1 25 0c0 5-2.200 8.200-5.200 12.200-3.700 5-6.600 8.500-7.300 17.500z"/><circle cx="1076.500" cy="448" r="4.600" fill="#811411"/>
    </svg><div class="ghost"><fit-text w="101">Recorte de <u>v</u>entana</fit-text></div>
    <div class="shade"></div><div class="cards"><div><slot name="left"></slot></div><div><slot name="right"></slot></div></div>`;
  }
});
define('stat-card', class extends Base {
  view() {
    const g = a => this.getAttribute(a), st = g('icon') === 'station';
    const labels = g('label').split('|').map(l => { const [t, w] = l.split(':'); return `<fit-text style="margin:0" w="${w}">${t}</fit-text>`; }).join('');
    return `<style>:host{display:flex;flex-direction:column;align-items:center;box-sizing:border-box;width:122px;height:122px;border-radius:10px;background:#fff;padding-top:22px;color:#3a3a3a}
    .n{font-size:25px;font-weight:300;line-height:30px;margin:7px 0 3px;height:30px;color:#222}.l{font-size:13px;line-height:18px;display:flex;flex-direction:column;align-items:center}</style>
    <ui-icon name="${g('icon')}" w="${st ? 21 : 14}" h="18" style="color:${g('color')}"></ui-icon><fit-text class="n" w="${g('nw')}">${osf(g('value'))}</fit-text><div class="l">${labels}</div>`;
  }
});

/* ---------- table ---------- */
const W = { ID: 12.5, Operario: 56, 'Estación': 54, Conector: 60, 'Conector ID': 76, Estado: 45, Acciones: 59, 'Celsia Colombia S.A. E.S.P': 166, 'Universidad ICESI': 114, 'Unversidad Javeriana': 137, 'Unicentro Cali': 91, 'Auto Sura Cali': 91, ICS0101: 51, ICS0201: 52, ICS0301: 52, JAV0101: 53, JAV0201: 54, JAV0301: 54, UNI0101: 54, UNI0201: 55, SURCA0101: 76, TIPO_1: 44, TIPO_2: 46, SCHUKO: 58, Disponible: 69, 'Fuera de servicio': 111, 1: 6 };
const T = t => `<fit-text w="${W[t]}">${osf(t)}</fit-text>`;
const GRID = 'display:grid;grid-template-columns:260px 260px 260px 260px 261px 261px 1fr;height:39px;box-sizing:border-box;border-bottom:1px solid #efefef;align-items:center;font-size:15px;';
define('table-head', class extends Base {
  view() { return `<style>:host{${GRID}background:#fafafa;border-radius:10px 10px 0 0;color:#111}
  div{display:flex;align-items:center;padding:0 8px}ui-icon:last-child:not(:nth-child(2)){margin-left:auto}</style>` +
  ['ID', 'Operario', 'Estación', 'Conector', 'Conector ID', 'Estado'].map(t => `<div>${T(t)}<ui-icon name="sort" w="9" h="12" style="margin-left:9px"></ui-icon><ui-icon name="filter" w="12" h="11"></ui-icon></div>`).join('') + `<div>${T('Acciones')}</div>`; }
});
define('charger-row', class extends Base {
  view() {
    const [id, st, con, on] = this.getAttribute('data').split('|');
    return `<style>:host{${GRID}color:#1c1c1c}div{display:flex;align-items:center;padding:0 8px}
    i{width:10px;height:10px;border-radius:50%;margin-right:10px;position:relative;top:1px;background:${on ? '#10c28f' : '#262626'}}</style>
    <div>${T(id)}</div><div>${T('Celsia Colombia S.A. E.S.P')}</div><div>${T(st)}</div><div>${T(con)}</div><div>${T('1')}</div>
    <div><i></i>${T(on ? 'Disponible' : 'Fuera de servicio')}</div>
    <div style="color:#37657f;padding:0 13px;margin-top:-5px"><ui-icon name="eye" w="20" h="14"></ui-icon><ui-icon name="pencil" w="18" h="18" style="margin-left:10px"></ui-icon></div>`;
  }
});
define('scroll-bar', class extends Base {
  view() { return `<style>:host{display:flex;flex-direction:column;align-items:center;width:17px;background:#f1f1f1}
  b{border:4px solid transparent;width:0;height:0;box-sizing:content-box}
  .u{border-bottom:4px solid #a3a3a3;border-top:0;margin:7px 0 6px}.t{width:13px;height:267px;background:#c1c1c1}.d{border-top:4px solid #505050;border-bottom:0;margin:auto 0 7px}</style><b class="u"></b><div class="t"></div><b class="d"></b>`; }
});
define('page-nav', class extends Base {
  view() { return `<style>:host{display:flex;height:64px;align-items:center;justify-content:flex-end;padding-right:9px;color:#1c1c1c}
  .n{width:24px;height:24px;box-sizing:border-box;text-align:center;line-height:24px;font-size:15px}.on{border:1px solid #37657f;border-radius:9px;line-height:23px;color:#37657f}
  .s{width:104px;height:32px;box-sizing:border-box;border:1px solid #d9d9d9;border-radius:10px;display:flex;padding:2px 10px 0 10px;line-height:20px;font-size:15px;justify-content:space-between;margin-left:12px}</style>
  <ui-icon name="prev" w="7" h="10" style="color:#c4c4c4;margin:4px 9px 0 0"></ui-icon><span class="n on">${osf(1)}</span>${[2, 3, 4, 5, 6, 7].map(n => `<span class="n">${osf(n)}</span>`).join('')}
  <ui-icon name="next" w="7" h="10" style="color:#333;margin:4px 0 0 9px"></ui-icon><div class="s"><fit-text w="63">${osf('10 / page')}</fit-text><ui-icon name="chev" w="11" h="8" style="color:#bfbfbf;margin-top:10px"></ui-icon></div>`; }
});
define('charger-panel', class extends Base {
  view() { return `<style>:host{display:block;background:#fff;font-size:15px;font-weight:300;color:#111;position:relative}
  .h{height:55px;box-sizing:border-box;border-bottom:1px solid #ececec;display:flex;align-items:center;padding:0 22px 2px 24px}
  .q{width:178px;height:32px;box-sizing:border-box;border:1px solid #8c8c8c;border-radius:10px;margin-left:auto;margin-right:10px;display:flex;align-items:center;padding-left:12px;color:#777}
  .body{display:flex;height:340px;overflow:hidden}.rows{flex:1}</style>
  <div class="h"><fit-text w="86" style="font-size:16px">Cargadores</fit-text><div class="q"><fit-text w="45">Buscar</fit-text></div><ui-button style="width:129px"><fit-text w="97">Descargar CSV</fit-text></ui-button><ui-icon name="x" w="12" h="12" style="margin:4px 0 0 26px;color:#7d7d7d"></ui-icon></div>
  <table-head></table-head><div class="body"><div class="rows">${['ICS0101|Universidad ICESI|TIPO_1|1', 'ICS0201|Universidad ICESI|TIPO_2|1', 'ICS0301|Universidad ICESI|SCHUKO|1', 'JAV0101|Unversidad Javeriana|TIPO_1|1', 'JAV0201|Unversidad Javeriana|TIPO_2|', 'JAV0301|Unversidad Javeriana|SCHUKO|', 'UNI0101|Unicentro Cali|TIPO_1|', 'UNI0201|Unicentro Cali|TIPO_2|1', 'SURCA0101|Auto Sura Cali|TIPO_1|'].map((d, i) => `<charger-row data="${d}" ${i === 8 ? 'style="border-color:transparent"' : ''}></charger-row>`).join('')}</div><scroll-bar></scroll-bar></div><page-nav></page-nav>`; }
});
define('mubon-app', class extends Base {
  view() { return `<style>:host{display:block;width:1920px;height:1040px;overflow:hidden;background:#fff}
  .m{display:flex;height:913px}.c{flex:1;min-width:0}.t{height:56px;display:flex;align-items:center;justify-content:space-between;padding:0 24px 0 24px;color:#222;font-weight:300;font-size:15px}</style>
  <browser-bar></browser-bar><app-header></app-header><div class="m"><side-nav></side-nav><div class="c">
  <div class="t"><fit-text w="103">Tablero General</fit-text><ui-button style="width:160px"><ui-icon name="plus" w="10" h="10" style="margin-right:9px"></ui-icon><fit-text w="107">Nuevo Cargador</fit-text></ui-button></div>
  <world-map><stat-card slot="left" icon="station" color="#000" value="15" nw="23" label="Total:28|estaciones:60"></stat-card><stat-card slot="left" icon="plug" color="#000" value="64" nw="27" label="Total:28|conectores:62"></stat-card>
  <stat-card slot="right" icon="plug" color="#00c48c" value="48" nw="27" label="Disponibles:65"></stat-card><stat-card slot="right" icon="plug" color="#479fd9" value="2" nw="12" label="Cargando:55"></stat-card><stat-card slot="right" icon="plug" color="#fa0a46" value="0" nw="13" label="Fallo de:44|conexión:50"></stat-card><stat-card slot="right" icon="plug" color="#999" value="14" nw="23" label="Fuera de:49|servicio:43"></stat-card></world-map>
  <charger-panel></charger-panel></div></div>`; }
});
</script>
</body>
</html>
